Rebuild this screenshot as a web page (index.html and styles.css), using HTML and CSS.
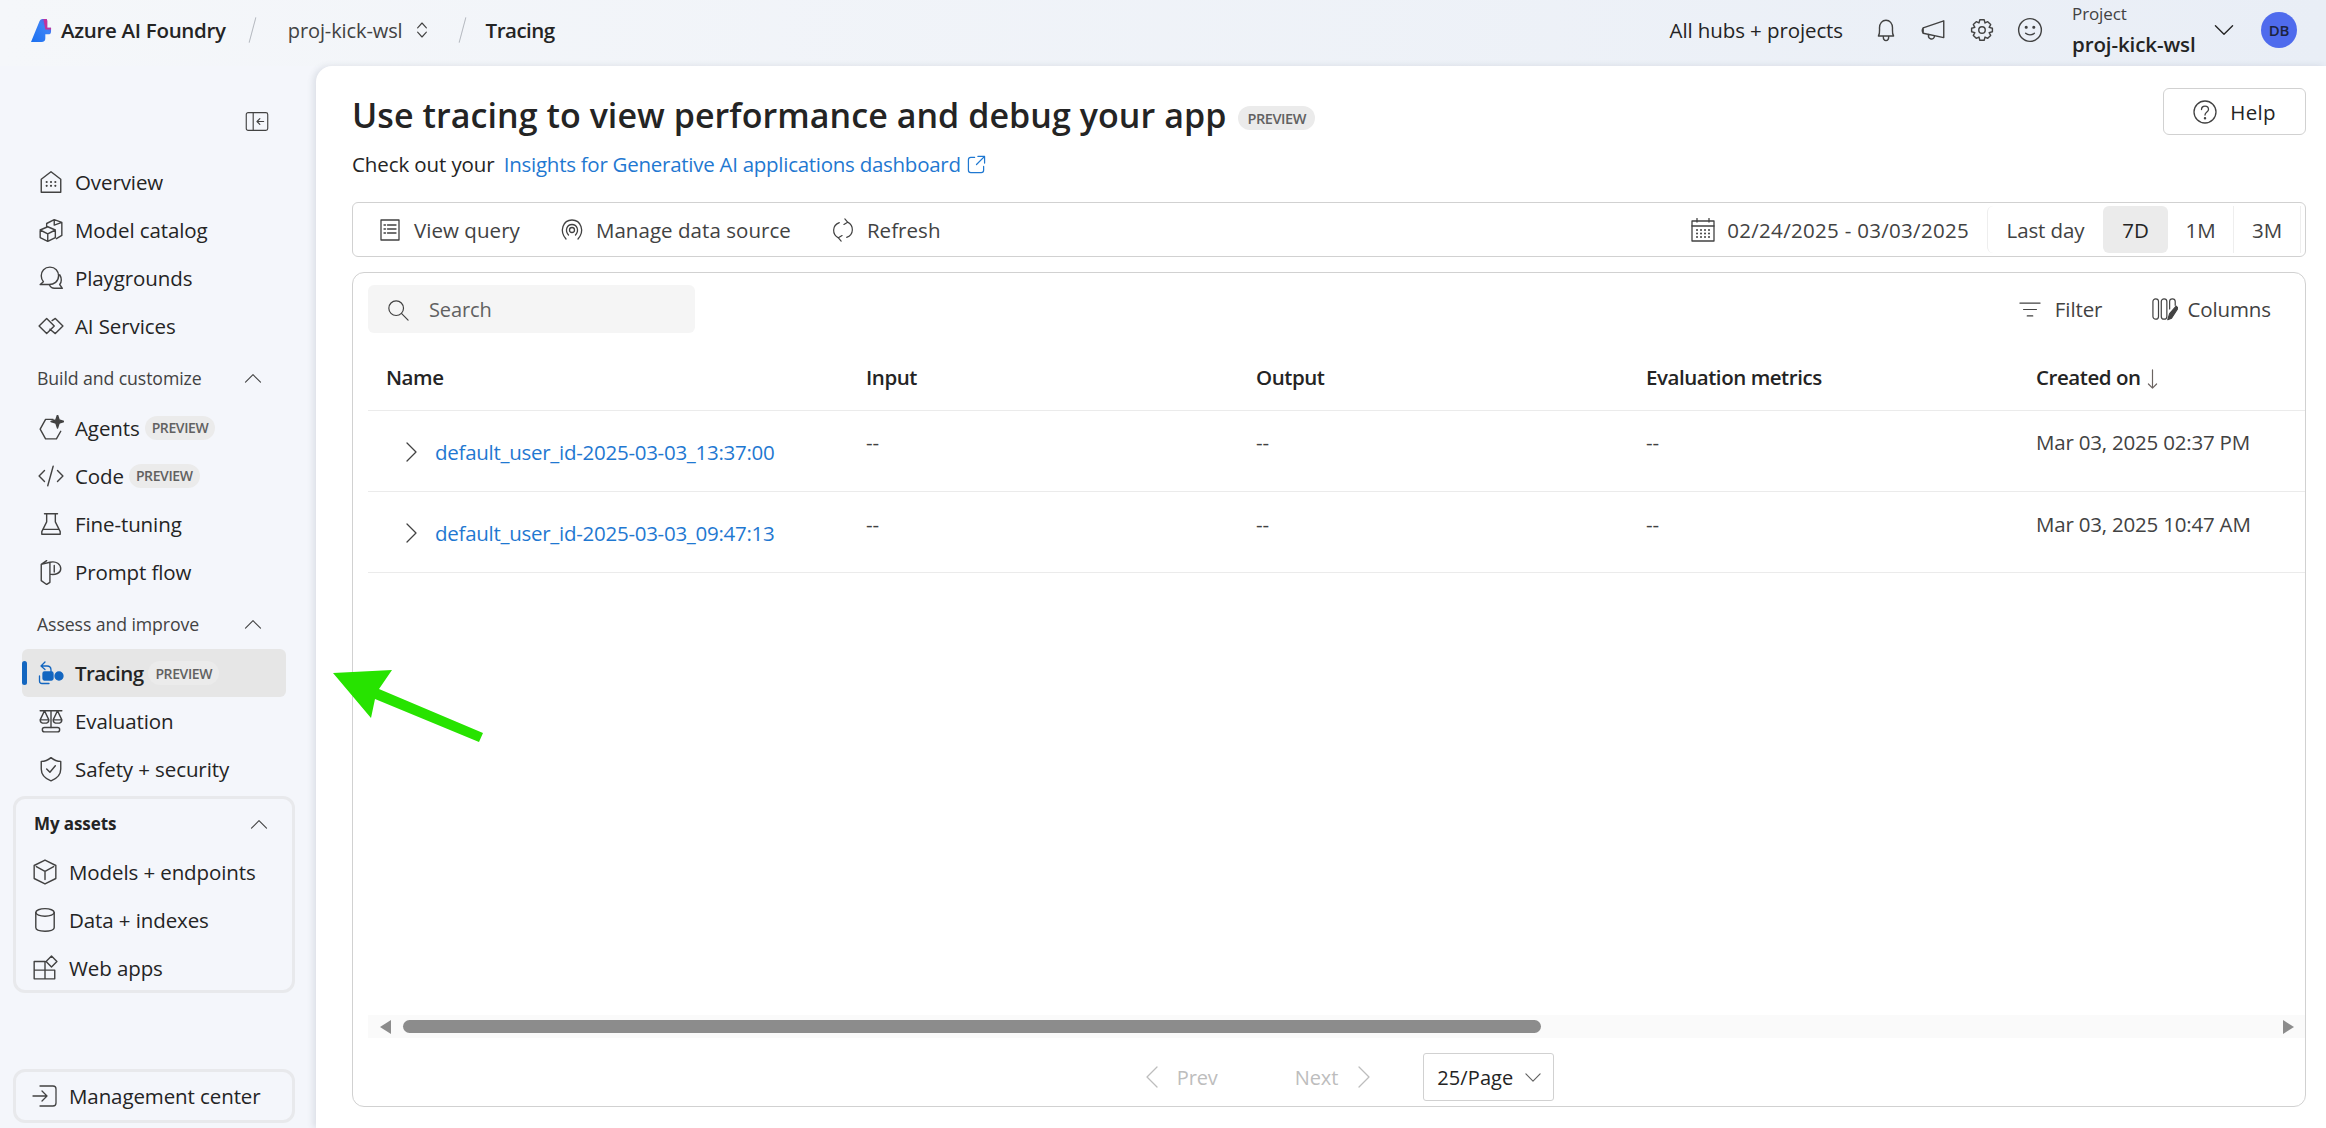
FILE: index.html
```html
<!DOCTYPE html>
<html lang="en">
<head>
  <meta charset="UTF-8" />
  <title>Tracing - Azure AI Foundry</title>
  <link rel="stylesheet" href="styles.css">
</head>
<body>
  <header class="topbar">
    <svg class="logo" viewBox="0 0 22 24">
      <defs>
        <linearGradient id="logoFill" x1="0" y1="1" x2="1" y2="0">
          <stop offset="0" stop-color="#1a6ff0"/>
          <stop offset="0.65" stop-color="#3b82f6"/>
          <stop offset="1" stop-color="#7a3fd0"/>
        </linearGradient>
      </defs>
      <path d="M0 24 L9 2 Q10 0 12 0 L16 0 Q17 0 17 2 L17 9 L21 9 L21 13 Q21 16 18 16 L15 16 L15 20 Q15 24 11 24 Z" fill="url(#logoFill)"/>
      <path d="M13 0 L16 0 Q17 0 17 2 L17 9 L21 9 L21 11 L15 11 Z" fill="#c2329b"/>
    </svg>
    <span class="brand">Azure AI Foundry</span>
    <span class="slash slash-first"></span>
    <span class="crumb">proj-kick-wsl</span>
    <svg class="icon updown" viewBox="0 0 16 24"><path d="M3 9.500 L8 4 L13 9.500 M3 14.500 L8 20 L13 14.500"/></svg>
    <span class="slash slash-second"></span>
    <span class="crumb-current">Tracing</span>

    <div class="topbar-right">
      <span class="hubs">All hubs + projects</span>
      <svg class="icon top-icon" viewBox="0 0 24 24"><path d="M5 17.500 C6.500 15.500 6 13 6 10 C6 6 8.500 3 12 3 C15.500 3 18 6 18 10 C18 13 17.500 15.500 19 17.500 Z M9.500 18 C9.500 23 14.500 23 14.500 18"/></svg>
      <svg class="icon top-icon" viewBox="0 0 24 24"><path d="M2 10 L21 3.500 L21 19 L2 15 Z M2 10 C1 11.500 1 13.500 2 15 M7 16 C6 21 12 22 12.500 17.500"/></svg>
      <svg class="icon top-icon" viewBox="0 0 24 24"><circle cx="12" cy="12" r="3"/><path d="M10 2.500 L14 2.500 L14.800 5.500 L17.300 4.300 L20 7 L18.600 9.600 L21.600 10.400 L21.600 13.600 L18.600 14.400 L20 17 L17.300 19.700 L14.800 18.500 L14 21.500 L10 21.500 L9.200 18.500 L6.700 19.700 L4 17 L5.400 14.400 L2.400 13.600 L2.400 10.400 L5.400 9.600 L4 7 L6.700 4.300 L9.200 5.500 Z"/></svg>
      <svg class="icon top-icon" viewBox="0 0 24 24"><circle cx="12" cy="12" r="10.500"/><circle class="dot" cx="8.500" cy="9.500" r="0.800"/><circle class="dot" cx="15.500" cy="9.500" r="0.800"/><path d="M8 15 C10 17 14 17 16 15"/></svg>
      <div class="project-picker">
        <span class="project-label">Project</span>
        <span class="project-name">proj-kick-wsl</span>
      </div>
      <svg class="icon picker-chevron" viewBox="0 0 24 14"><path d="M2 2 L12 12 L22 2"/></svg>
      <span class="avatar">DB</span>
    </div>
  </header>

  <div class="layout">
    <nav class="sidebar">
      <div class="collapse-row">
        <svg class="icon collapse" viewBox="0 0 24 20"><rect x="0.700" y="0.700" width="22.600" height="18.600" rx="2"/><path d="M8 1 L8 19 M19 10 L12 10 M15 7 L12 10 L15 13"/></svg>
      </div>

      <a class="nav-item"><svg class="icon" viewBox="0 0 24 24"><path d="M3 21.500 L3 9.500 L12 2.500 L21 9.500 L21 21.500 Z"/><path class="dots" d="M8 12 h.01 M12 12 h.01 M16 12 h.01 M8 15.500 h.01 M12 15.500 h.01 M16 15.500 h.01"/></svg>Overview</a>
      <a class="nav-item"><svg class="icon" viewBox="0 0 24 24"><path d="M8 6 L15 2.500 L22 5 L22 17 L17 20 M8 6 L8 9 M15 7.500 L22 5 M15 2.500 L15 7.500 M2 12 L9 9 L16 12 L16 19 L9 22.500 L2 19 Z M2 12 L9 15.500 L16 12 M9 15.500 L9 22.500"/></svg>Model catalog</a>
      <a class="nav-item"><svg class="icon" viewBox="0 0 24 24"><path d="M11 2 C6 2 3 5.500 3 10 C3 12 3.500 14 5 15.500 L2 18 L9 18 C15 18.500 19 15 19 10 C19 5.500 16 2 11 2 Z M20 9 C22 12 22 16 20 18 L22.500 21.500 L15 21.500 C13 21.500 11.500 20.500 10.500 18.500"/></svg>Playgrounds</a>
      <a class="nav-item"><svg class="icon" viewBox="0 0 24 24"><path d="M8 5 L15 12 L8 19 L1 12 Z M13 7 L16 5 L23 12 L16 19 L11 15"/></svg>AI Services</a>

      <div class="nav-section"><span>Build and customize</span><svg class="icon chevron-up" viewBox="0 0 20 12"><path d="M1 11 L10 2 L19 11"/></svg></div>
      <a class="nav-item"><svg class="icon" viewBox="0 0 24 24"><path d="M14 4 L7 4 L2 13 L7 22 L17 22 L21 15"/><path class="solid" d="M18 0 L19.500 4.500 L24 6 L19.500 7.500 L18 12 L16.500 7.500 L12 6 L16.500 4.500 Z"/></svg>Agents<span class="badge">PREVIEW</span></a>
      <a class="nav-item"><svg class="icon" viewBox="0 0 24 24"><path d="M6 7 L1 12 L6 17 M18 7 L23 12 L18 17 M14 3 L9 21"/></svg>Code<span class="badge">PREVIEW</span></a>
      <a class="nav-item"><svg class="icon" viewBox="0 0 24 24"><path d="M6 2.500 L18 2.500 M8 2.500 L8 10 L3.500 19 L3.500 21.500 L20.500 21.500 L20.500 19 L16 10 L16 2.500 M5 17 L19 17"/></svg>Fine-tuning</a>
      <a class="nav-item"><svg class="icon" viewBox="0 0 24 24"><path d="M8 1.500 L3 5 L3 20 L8 23.500 L11 21.500 L11 3 C17 1.500 21 5 21 9 C21 13 16 15 11 14 M3 5 L11 3 M15 6 L15 12"/></svg>Prompt flow</a>

      <div class="nav-section"><span>Assess and improve</span><svg class="icon chevron-up" viewBox="0 0 20 12"><path d="M1 11 L10 2 L19 11"/></svg></div>
      <a class="nav-item active"><svg class="icon trace-icon" viewBox="0 0 26 24"><path d="M7 1 L3 5 L7 8.500 M3 5 L9 5 C12 5 13 7 13 9 L13 12"/><rect class="trace-fill" x="5" y="11" width="10" height="8" rx="1.500"/><path d="M1.500 15 L1.500 20 Q1.500 22.500 4 22.500 L11 22.500"/><circle class="trace-fill" cx="21" cy="15" r="4"/></svg>Tracing<span class="badge">PREVIEW</span></a>
      <a class="nav-item"><svg class="icon" viewBox="0 0 24 24"><path d="M2 2.500 L22 2.500 M12 2.500 L12 18 M6 2.500 L2 11 C2 15 10 15 10 11 L6 2.500 M18 2.500 L14 11 C14 15 22 15 22 11 L18 2.500 M2 11 L10 11 M14 11 L22 11"/><rect x="4" y="18" width="16" height="4" rx="2"/></svg>Evaluation</a>
      <a class="nav-item"><svg class="icon" viewBox="0 0 24 24"><path d="M12 1.500 C9 4 6.500 5 3 5 L3 12 C3 17 7 21 12 23 C17 21 21 17 21 12 L21 5 C17.500 5 15 4 12 1.500 Z M8 12 L11 15 L16 9"/></svg>Safety + security</a>

      <div class="assets-box">
        <div class="assets-head"><span>My assets</span><svg class="icon chevron-up" viewBox="0 0 20 12"><path d="M1 11 L10 2 L19 11"/></svg></div>
        <a class="asset-item"><svg class="icon" viewBox="0 0 24 24"><path d="M12 1 L22 6 L22 18 L12 23 L2 18 L2 6 Z M4 7 L12 11.500 L20 7 M12 11.500 L12 19"/></svg>Models + endpoints</a>
        <a class="asset-item"><svg class="icon" viewBox="0 0 24 24"><ellipse cx="12" cy="5" rx="8.500" ry="3.500"/><path d="M3.500 5 L3.500 19 C3.500 23.500 20.500 23.500 20.500 19 L20.500 5"/></svg>Data + indexes</a>
        <a class="asset-item"><svg class="icon" viewBox="0 0 24 24"><path d="M2 6 L12 6 L12 22 L2 22 Z M2 14 L21 14 L21 22 L12 22 M18 1 L23 6 L18 11 L13 6 Z"/></svg>Web apps</a>
      </div>

      <a class="manage-box"><svg class="icon" viewBox="0 0 26 24"><path d="M1 12 L15 12 M10 7 L15 12 L10 17 M8 2 L21 2 Q24 2 24 5 L24 19 Q24 22 21 22 L8 22"/></svg>Management center</a>
    </nav>

    <main class="panel">
      <div class="title-row">
        <h1>Use tracing to view performance and debug your app</h1>
        <span class="badge title-badge">PREVIEW</span>
        <button class="help-btn"><svg class="icon" viewBox="0 0 24 24"><circle cx="12" cy="12" r="11"/><path d="M8.500 9.500 C8.500 5 15.500 5 15.500 9.500 C15.500 12 12 12 12 15"/><circle class="dot" cx="12" cy="18.300" r="0.600"/></svg>Help</button>
      </div>
      <p class="subtitle">Check out your <a class="link">Insights for Generative AI applications dashboard</a>
        <svg class="icon link-icon" viewBox="0 0 20 20"><path d="M8 2.500 L4 2.500 Q1.500 2.500 1.500 5 L1.500 16 Q1.500 18.500 4 18.500 L15 18.500 Q17.500 18.500 17.500 16 L17.500 12 M11.500 1.500 L18.500 1.500 L18.500 8.500 M18.500 1.500 L10 10"/></svg>
      </p>

      <div class="toolbar">
        <button class="tool tool-query"><svg class="icon" viewBox="0 0 20 24"><rect x="1" y="2" width="18" height="20"/><path d="M4 7 h1.500 M7.500 7 h8.500 M4 11 h1.500 M7.500 11 h8.500 M4 15 h1.500 M7.500 15 h8.500"/></svg>View query</button>
        <button class="tool tool-source"><svg class="icon" viewBox="0 0 24 24"><path d="M6 21 C-1 13 3 2 12 2 C21 2 25 13 18 21 M8.500 17 C4.500 12.500 7 6.500 12 6.500 C17 6.500 19.500 12.500 15.500 17"/><circle cx="12" cy="12" r="2.500"/></svg>Manage data source</button>
        <button class="tool"><svg class="icon" viewBox="0 0 24 26"><path d="M8 5 C0 8 0 18 7 21.500 M16 21 C24 18 24 8 17 4.500 M14 1 L17 4.500 L13 7 M10 25 L7 21.500 L11 19"/></svg>Refresh</button>

        <div class="date-range">
          <svg class="icon" viewBox="0 0 24 24"><rect x="1" y="3" width="22" height="20"/><path d="M1 8 L23 8 M6 0.500 L6 4 M18 0.500 L18 4"/><path class="dots" d="M6 12 h.01 M10 12 h.01 M14 12 h.01 M18 12 h.01 M6 15.500 h.01 M10 15.500 h.01 M14 15.500 h.01 M18 15.500 h.01 M6 19 h.01 M10 19 h.01 M14 19 h.01 M18 19 h.01"/></svg>
          <span class="date-text">02/24/2025 - 03/03/2025</span>
        </div>
        <div class="ranges">
          <span class="range range-day">Last day</span>
          <span class="range range-7d selected">7D</span>
          <span class="range range-1m">1M</span>
          <span class="range range-3m">3M</span>
        </div>
      </div>

      <section class="table-card">
        <div class="table-top">
          <div class="search"><svg class="icon" viewBox="0 0 24 24"><circle cx="10" cy="10" r="8"/><path d="M16 16 L23 23"/></svg><span>Search</span></div>
          <button class="table-action action-filter"><svg class="icon" viewBox="0 0 24 18"><path d="M1 2 L23 2 M5 9 L19 9 M9 16 L15 16"/></svg>Filter</button>
          <button class="table-action"><svg class="icon" viewBox="0 0 28 24"><rect x="1" y="1" width="6" height="22" rx="3"/><rect x="10" y="1" width="6" height="22" rx="3"/><path d="M19 12 L19 4 Q19 1 22 1 Q25 1 25 4 L25 8"/><path class="solid" d="M19 17 L26 9 L28 11 L21 22 L17 23.500 Z"/></svg>Columns</button>
        </div>

        <table class="traces">
          <thead>
            <tr>
              <th class="col-name">Name</th>
              <th class="col-text">Input</th>
              <th class="col-text">Output</th>
              <th class="col-text">Evaluation metrics</th>
              <th>Created on <svg class="icon sort-arrow" viewBox="0 0 12 22"><path d="M6 1 L6 21 M1.500 16.500 L6 21 L10.500 16.500"/></svg></th>
            </tr>
          </thead>
          <tbody>
            <tr>
              <td class="trace-name"><svg class="icon row-chevron" viewBox="0 0 12 20"><path d="M2 1 L11 10 L2 19"/></svg><a class="link">default_user_id-2025-03-03_13:37:00</a></td>
              <td>--</td>
              <td>--</td>
              <td>--</td>
              <td>Mar 03, 2025 02:37 PM</td>
            </tr>
            <tr>
              <td class="trace-name"><svg class="icon row-chevron" viewBox="0 0 12 20"><path d="M2 1 L11 10 L2 19"/></svg><a class="link">default_user_id-2025-03-03_09:47:13</a></td>
              <td>--</td>
              <td>--</td>
              <td>--</td>
              <td>Mar 03, 2025 10:47 AM</td>
            </tr>
          </tbody>
        </table>

        <div class="scroll-track">
          <span class="arrow-left"></span>
          <span class="scroll-thumb"></span>
          <span class="arrow-right"></span>
        </div>

        <div class="pager">
          <svg class="icon pager-chevron" viewBox="0 0 14 24"><path d="M12 2 L2 12 L12 22"/></svg>
          <span class="pager-text pager-prev">Prev</span>
          <span class="pager-text pager-next">Next</span>
          <svg class="icon pager-chevron" viewBox="0 0 14 24"><path d="M2 2 L12 12 L2 22"/></svg>
          <div class="page-size">25/Page<svg class="icon" viewBox="0 0 18 10"><path d="M1 1 L9 9 L17 1"/></svg></div>
        </div>
      </section>
    </main>
  </div>

  <svg class="callout" viewBox="0 0 160 80" width="160" height="80">
    <path d="M0 3 L59 0 L46 19 L150 63 L146 72 L42 29 L38 48 Z"/>
  </svg>
</body>
</html>
```

FILE: styles.css
```css
* {
  box-sizing: border-box;
}

body {
  margin: 0;
  height: 100vh;
  overflow: hidden;
  display: flex;
  flex-direction: column;
  position: relative;
  font-family: "Open Sans", "Noto Sans", sans-serif;
  font-size: 20.5px;
  letter-spacing: -0.1px;
  color: #242424;
  background: #f4f6fb;
}

button {
  font: inherit;
  letter-spacing: inherit;
  color: inherit;
  background: none;
  border: none;
  padding: 0;
  display: flex;
  align-items: center;
}

.icon {
  fill: none;
  stroke: #424242;
  stroke-width: 1.3;
  stroke-linecap: round;
  stroke-linejoin: round;
  flex-shrink: 0;
}

.icon .dot,
.icon .solid {
  fill: #424242;
}

.icon .dots {
  stroke-width: 2;
}

/* top bar */
.topbar {
  height: 66px;
  flex-shrink: 0;
  display: flex;
  align-items: center;
  padding: 0 0 6px 31px;
  background: linear-gradient(90deg, #f5f7fa, #e9eef6);
}

.logo {
  width: 21px;
  height: 23px;
  margin-right: 9px;
}

.brand {
  font-weight: 600;
  letter-spacing: -0.3px;
}

.slash {
  width: 1px;
  height: 26px;
  background: #b5b9c0;
  transform: rotate(15deg);
}

.slash-first {
  margin: 0 35px 0 26px;
}

.slash-second {
  margin: 0 23px 0 33px;
}

.crumb {
  color: #424242;
  font-size: 20px;
}

.updown {
  width: 14px;
  height: 22px;
  margin-left: 12px;
}

.crumb-current {
  font-weight: 600;
  letter-spacing: -0.5px;
}

.topbar-right {
  margin-left: auto;
  display: flex;
  align-items: center;
  padding-right: 29px;
}

.hubs {
  margin-right: 30px;
}

.top-icon {
  width: 26px;
  height: 26px;
  margin-right: 22px;
}

.project-picker {
  display: flex;
  flex-direction: column;
  margin-left: 7px;
  width: 141px;
}

.project-label {
  font-size: 17px;
  line-height: 28px;
  color: #424242;
}

.project-name {
  font-weight: 600;
  line-height: 33px;
}

.picker-chevron {
  width: 22px;
  height: 12px;
  margin: 0 26px 0 0;
  stroke: #242424;
  stroke-width: 1.6;
}

.avatar {
  width: 36px;
  height: 36px;
  border-radius: 50%;
  background: #4f6bed;
  color: #1c2340;
  font-size: 15px;
  font-weight: 600;
  display: flex;
  align-items: center;
  justify-content: center;
}

/* sidebar */
.layout {
  flex: 1;
  display: flex;
  min-height: 0;
}

.sidebar {
  width: 316px;
  flex-shrink: 0;
  display: flex;
  flex-direction: column;
  padding-top: 92px;
  position: relative;
}

.collapse-row {
  position: absolute;
  top: 46px;
  left: 245px;
  display: flex;
}

.collapse {
  width: 24px;
  height: 19px;
  stroke-width: 1.2;
}

.nav-item {
  height: 48px;
  flex-shrink: 0;
  width: 264px;
  margin-left: 22px;
  padding-left: 16px;
  display: flex;
  align-items: center;
  border-radius: 6px;
  position: relative;
  color: #242424;
}

.nav-item .icon,
.asset-item .icon,
.manage-box .icon {
  width: 26px;
  height: 26px;
  margin-right: 11px;
}

.nav-item.active {
  background: #e6e6e6;
  font-weight: 600;
  letter-spacing: -0.6px;
}

.nav-item.active::before {
  content: "";
  position: absolute;
  left: 0;
  top: 12px;
  width: 5px;
  height: 24px;
  border-radius: 3px;
  background: #1366c0;
}

.trace-icon {
  stroke: #1366c0;
}

.trace-icon .trace-fill {
  fill: #1366c0;
}

.nav-section {
  height: 53.5px;
  flex-shrink: 0;
  padding: 3px 54px 0 37px;
  display: flex;
  align-items: center;
  justify-content: space-between;
  font-size: 17.7px;
  font-weight: 500;
  color: #424242;
}

.nav-section .chevron-up,
.assets-head .chevron-up {
  width: 18px;
  height: 10px;
  margin: 0;
}

.badge {
  margin-left: 5px;
  height: 24px;
  padding: 0 7px;
  border-radius: 12px;
  background: #ebebeb;
  color: #616161;
  font-size: 14px;
  font-weight: 600;
  letter-spacing: -0.4px;
  display: flex;
  align-items: center;
}

.assets-box {
  margin: 3px 0 0 13px;
  width: 282px;
  height: 197px;
  flex-shrink: 0;
  border: 3px solid #e8e9ec;
  border-radius: 12px;
}

.assets-head {
  height: 49px;
  padding: 0 24px 0 18px;
  display: flex;
  align-items: center;
  justify-content: space-between;
  font-size: 17px;
  font-weight: 700;
}

.asset-item {
  height: 48px;
  padding-left: 16px;
  display: flex;
  align-items: center;
}

.manage-box {
  margin: auto 0 5px 13px;
  width: 282px;
  height: 54px;
  flex-shrink: 0;
  border: 3px solid #e8e9ec;
  border-radius: 12px;
  padding-left: 16px;
  display: flex;
  align-items: center;
}

/* main panel */
.panel {
  flex: 1;
  min-width: 0;
  display: flex;
  flex-direction: column;
  background: #fff;
  border-top-left-radius: 16px;
  box-shadow: -3px 0 6px rgba(60, 70, 90, 0.12);
  padding: 22px 20px 21px 36px;
}

.title-row {
  display: flex;
  align-items: flex-start;
  height: 56px;
  flex-shrink: 0;
}

h1 {
  margin: 0;
  font-size: 34px;
  font-weight: 600;
  line-height: 54px;
  letter-spacing: 0.06px;
}

.title-badge {
  margin: 18px 0 0 12px;
  padding: 0 9px;
  font-size: 14.5px;
}

.help-btn {
  margin-left: auto;
  width: 143px;
  height: 47px;
  border: 1px solid #d1d1d1;
  border-radius: 6px;
  justify-content: center;
  letter-spacing: 0.3px;
}

.help-btn .icon {
  width: 24px;
  height: 24px;
  margin-right: 13px;
}

.subtitle {
  margin: 0 0 18px;
  height: 40px;
  flex-shrink: 0;
  display: flex;
  align-items: center;
  color: #242424;
  white-space: pre;
}

.link {
  color: #1f78d1;
  letter-spacing: -0.27px;
}

.subtitle .link {
  margin-left: 4px;
}

.link-icon {
  width: 19px;
  height: 19px;
  margin-left: 6px;
  stroke: #1f78d1;
}

.toolbar {
  height: 55px;
  flex-shrink: 0;
  border: 1px solid #d1d1d1;
  border-radius: 6px;
  display: flex;
  align-items: center;
  padding: 0 0 0 27px;
  color: #424242;
}

.tool {
  letter-spacing: 0.05px;
}

.tool .icon {
  width: 24px;
  height: 24px;
  margin-right: 12px;
}

.tool-query .icon {
  width: 20px;
  margin-right: 14px;
}

.tool-query {
  margin-right: 40px;
}

.tool-source {
  margin-right: 40px;
}

.date-range {
  margin-left: auto;
  display: flex;
  align-items: center;
  gap: 12px;
}

.date-range .icon {
  width: 24px;
  height: 24px;
}

.date-text {
  letter-spacing: 0.3px;
}

.ranges {
  display: flex;
  align-items: center;
  margin-left: 18px;
  height: 47px;
  padding-right: 4px;
}

.range {
  height: 47px;
  display: flex;
  align-items: center;
  justify-content: center;
  border-radius: 6px;
  border-left: 1px solid #eeeeee;
}

.range-day {
  width: 116px;
}

.range-7d {
  width: 65px;
}

.range-1m {
  width: 65px;
  border: none;
}

.range-3m {
  width: 68px;
  border-right: 1px solid #eeeeee;
  border-radius: 0;
}

.range.selected {
  background: #ebebeb;
  color: #242424;
  font-weight: 500;
  border: none;
}

.table-card {
  flex: 1;
  min-height: 0;
  margin-top: 15px;
  border: 1px solid #d1d1d1;
  border-radius: 12px;
  padding: 12px 0 5px 15px;
  display: flex;
  flex-direction: column;
}

.table-top {
  display: flex;
  align-items: center;
  height: 48px;
  flex-shrink: 0;
  padding-right: 34px;
  color: #424242;
}

.search {
  width: 327px;
  height: 48px;
  background: #f5f5f5;
  border-radius: 6px;
  display: flex;
  align-items: center;
  padding: 1px 0 0 19px;
  color: #616161;
  font-size: 20px;
}

.search .icon {
  width: 22px;
  height: 22px;
  margin-right: 20px;
}

.table-action .icon {
  width: 26px;
  height: 24px;
  margin-right: 9px;
}

.action-filter {
  margin-left: auto;
  margin-right: 50px;
}

.action-filter .icon {
  width: 22px;
  height: 17px;
  margin-right: 14px;
}

.traces {
  width: 100%;
  table-layout: fixed;
  border-collapse: collapse;
  margin-top: 11px;
}

.traces th {
  height: 66px;
  text-align: left;
  font-weight: 600;
  letter-spacing: -0.45px;
  padding: 0;
  border-bottom: 1px solid #ebebeb;
  color: #242424;
}

.traces .col-name {
  width: 498px;
  padding-left: 18px;
}

.col-text {
  width: 390px;
}

.sort-arrow {
  width: 11px;
  height: 20px;
  margin-left: 2px;
  vertical-align: -4px;
  stroke: #6b6461;
}

.traces td {
  height: 81px;
  padding: 0 0 17px;
  border-bottom: 1px solid #ebebeb;
  color: #424242;
  letter-spacing: -0.2px;
}

.traces td.trace-name {
  padding: 3px 0 0 37px;
  display: flex;
  align-items: center;
}

.row-chevron {
  width: 12px;
  height: 20px;
  margin-right: 18px;
}

.scroll-track {
  margin-top: auto;
  height: 23px;
  flex-shrink: 0;
  background: #fafafa;
  display: flex;
  align-items: center;
  padding: 0 11px 0 12px;
}

.arrow-left,
.arrow-right {
  width: 0;
  height: 0;
  border-top: 7px solid transparent;
  border-bottom: 7px solid transparent;
}

.arrow-left {
  border-right: 11px solid #8c8c8c;
  margin-right: 12px;
}

.arrow-right {
  border-left: 11px solid #8c8c8c;
  margin-left: auto;
}

.scroll-thumb {
  width: 1138px;
  height: 13px;
  border-radius: 7px;
  background: #8c8c8c;
}

.pager {
  margin-top: 15px;
  height: 48px;
  flex-shrink: 0;
  display: flex;
  align-items: center;
  justify-content: center;
  padding-left: 26px;
}

.pager-chevron {
  width: 14px;
  height: 24px;
  stroke: #bdbdbd;
}

.pager-text {
  color: #bdbdbd;
  font-weight: 500;
  font-size: 20px;
}

.pager-prev {
  margin: 0 77px 0 18px;
}

.pager-next {
  margin-right: 19px;
}

.page-size {
  margin-left: 52px;
  width: 131px;
  height: 48px;
  border: 1px solid #d1d1d1;
  border-radius: 3px;
  display: flex;
  align-items: center;
  padding-left: 13px;
  font-size: 20px;
  letter-spacing: 0.1px;
}

.page-size .icon {
  width: 16px;
  height: 9px;
  margin-left: 12px;
  stroke: #616161;
}

/* annotation on top of the screenshot */
.callout {
  position: absolute;
  left: 333px;
  top: 670px;
}

.callout path {
  fill: #27e300;
}
```
